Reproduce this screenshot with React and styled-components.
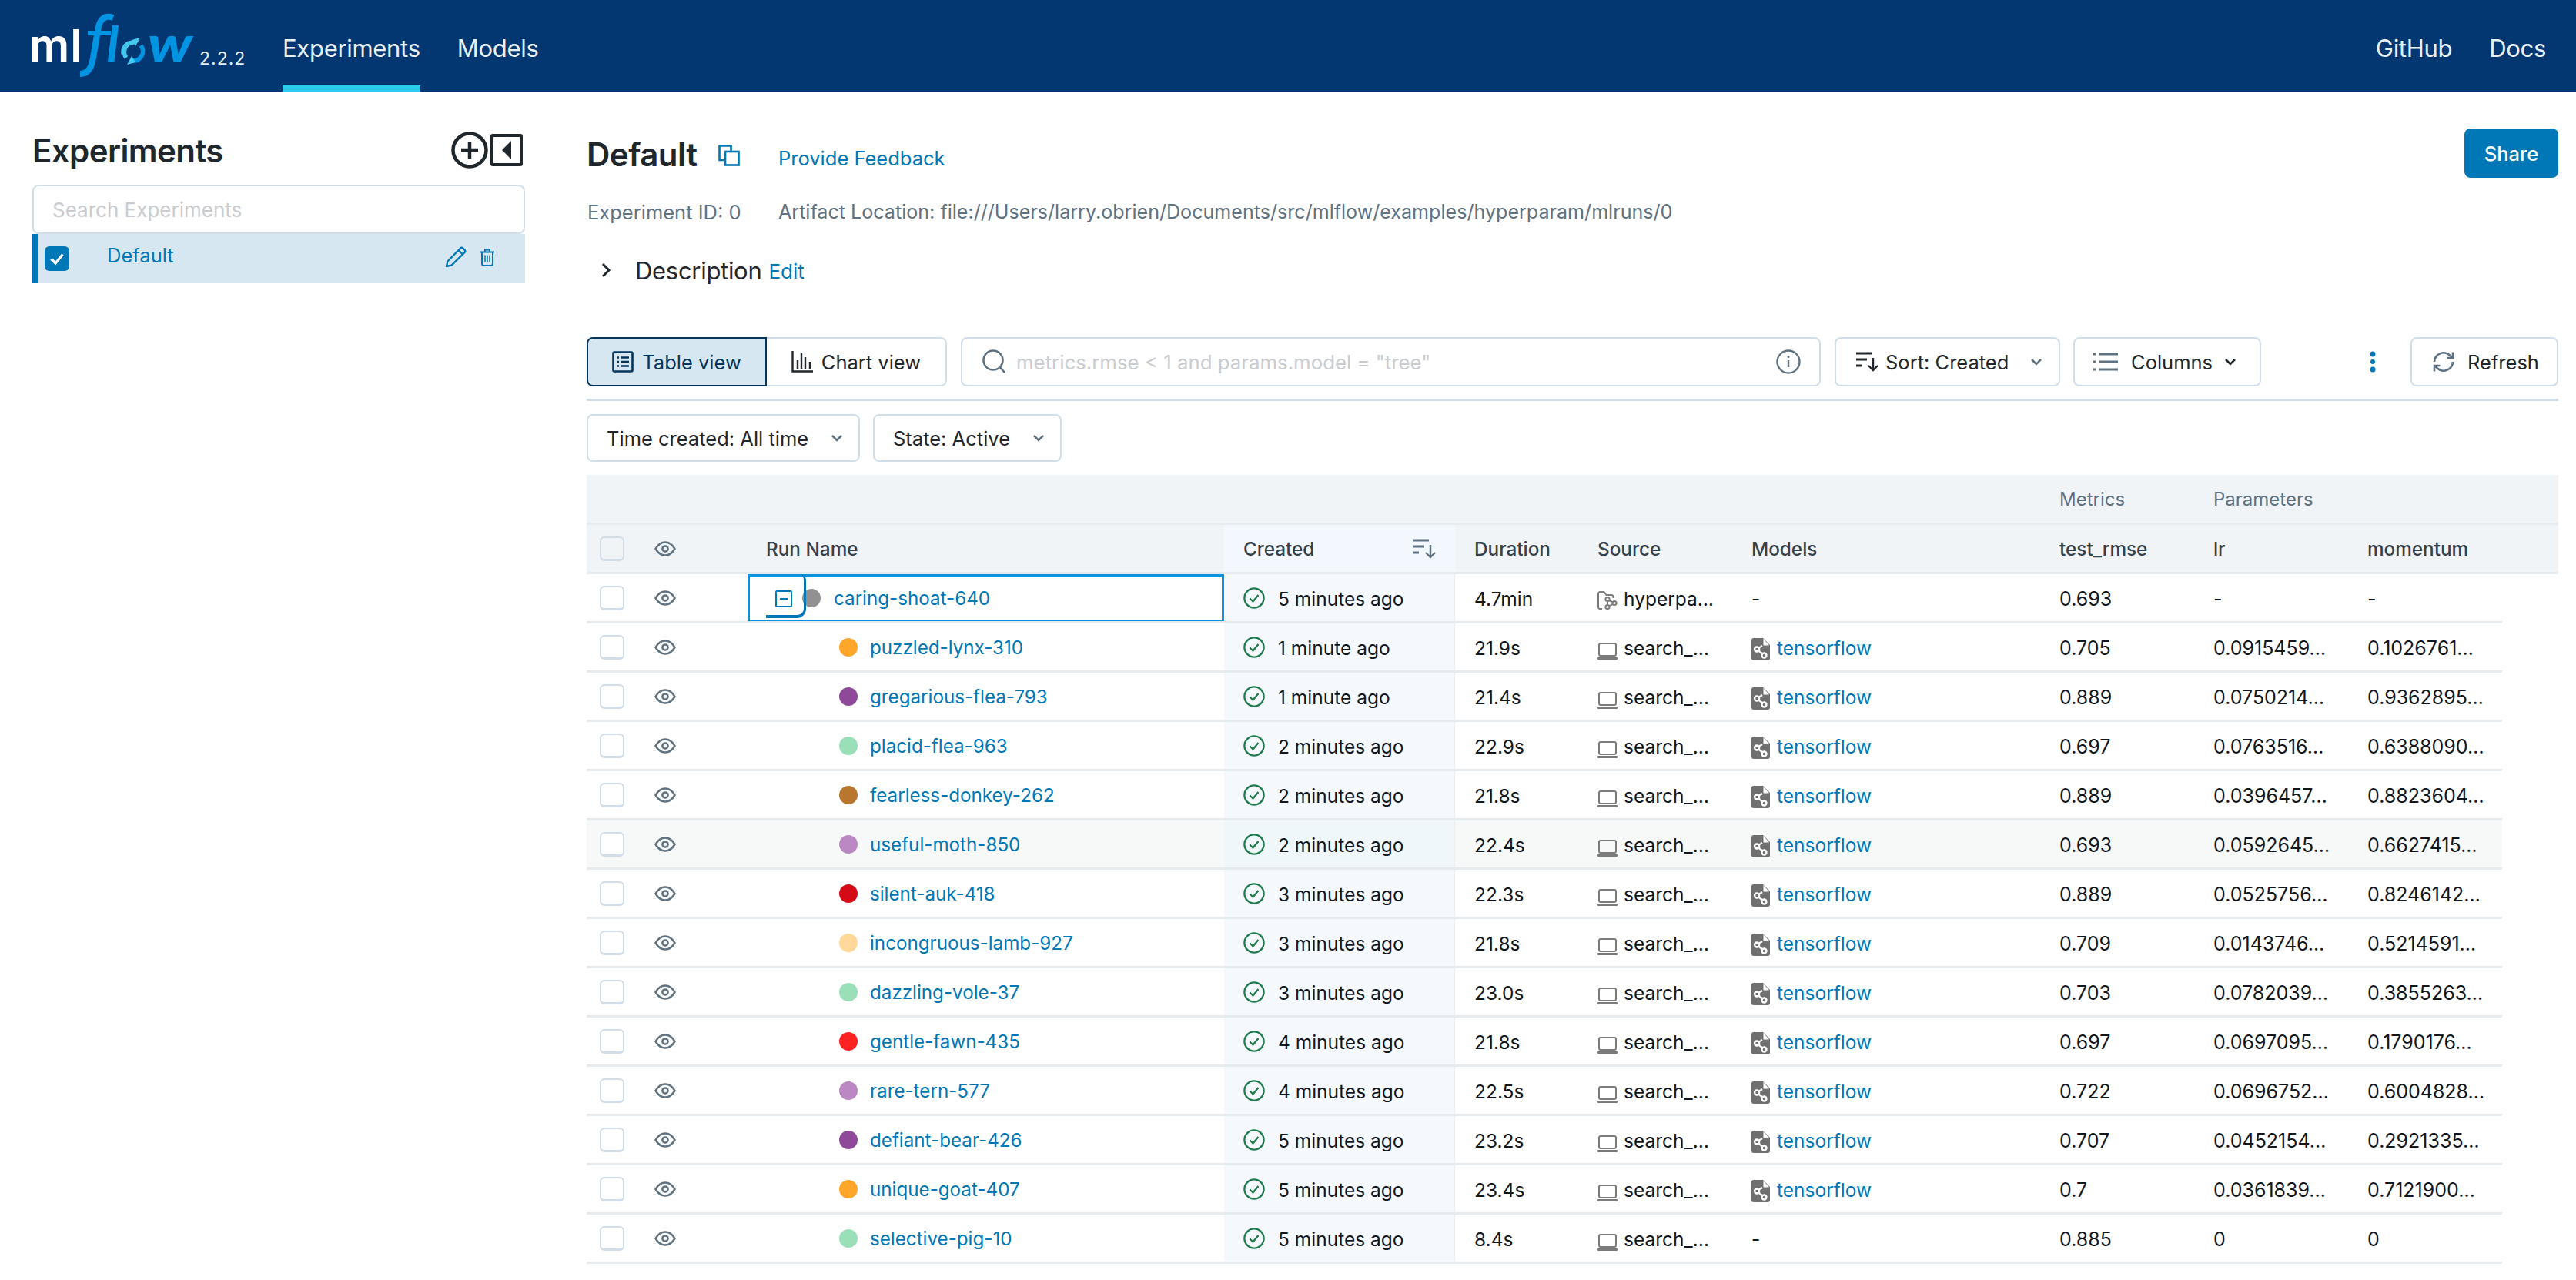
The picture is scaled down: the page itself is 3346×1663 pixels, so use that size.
import React from "react";
import styled, { createGlobalStyle } from "styled-components";

const GlobalStyle = createGlobalStyle`
  html, body { margin: 0; padding: 0; background: #fff; }
  body { font-family: Inter, "Liberation Sans", sans-serif; color: #11171c; overflow: hidden; }
  #root { width: 3346px; height: 1663px; overflow: hidden; }
  * { box-sizing: border-box; }
`;

const Shell = styled.div`display: flex; flex-direction: column; width: 3346px; height: 1663px;`;
const Header = styled.header`
  height: 119px; flex: none; background: #033771; display: flex; align-items: stretch; padding: 0 39px 0 42px;
`;
const Brand = styled.div`display: flex; align-items: flex-start; width: 325px; padding-top: 19px; position: relative;`;
const LogoSvg = styled.svg`width: 215px; height: 82px; flex: none; overflow: visible;`;
const Version = styled.span`
  font-size: 23px; color: #e8f0f7; letter-spacing: 1px; margin: 43px 0 0 2px; font-weight: 400;
`;
const NavItem = styled.a`
  display: flex; align-items: center; height: 119px; font-size: 31px; color: #e8f0f7;
  margin-right: ${p => p.$gap || 0}px; letter-spacing: -0.3px;
  border-bottom: 8px solid ${p => (p.$active ? "#2dcbee" : "transparent")};
  padding-top: 14px;
`;
const NavRight = styled.div`margin-left: auto; display: flex;`;

const Body = styled.div`display: flex; flex: 1; min-height: 0;`;
const Sidebar = styled.aside`width: 640px; margin-left: 42px; flex: none; padding-top: 52px;`;
const SideHead = styled.div`display: flex; align-items: center; height: 48px; padding: 0 3px 0 0;`;
const SideTitle = styled.h2`
  margin: 0; font-size: 42px; font-weight: 600; color: #1f272d; letter-spacing: -0.6px; line-height: 48px; padding-top: 2px;
`;
const SideTools = styled.div`margin-left: auto; display: flex; align-items: center; gap: 3px; color: #1f272d;`;
const SideSearch = styled.div`
  margin-top: 21px; height: 64px; border: 2px solid #d1dee9; border-radius: 8px; display: flex; align-items: center;
  padding-left: 24px; font-size: 26px; color: #c9ccd0;
`;
const ExpRow = styled.div`
  height: 64px; background: #d6e7f2; border-left: 8px solid #0077b6; display: flex; align-items: center;
  padding-left: 8px; color: #0077b6; font-size: 25.5px;
`;
const CheckedBox = styled.span`
  width: 32px; height: 32px; background: #0077b6; border-radius: 6px; display: flex; align-items: center; justify-content: center; flex: none;
`;
const ExpName = styled.span`margin-left: 49px; padding-bottom: 10px;`;
const ExpTools = styled.span`margin-left: auto; display: flex; align-items: center; gap: 17px; padding-right: 39px; padding-bottom: 4px;`;

const Main = styled.main`width: 2561px; margin-left: 80px; flex: none;`;
const TitleRow = styled.div`display: flex; align-items: center; height: 64px; margin-top: 48px;`;
const Title = styled.h1`margin: 2px 0 0 0; font-size: 42px; font-weight: 600; color: #1f272d; letter-spacing: -0.5px; width: 171px;`;
const CopyWrap = styled.span`display: flex; width: 78px; padding-top: 6px;`;
const LinkText = styled.a`color: #0077b6; font-size: ${p => p.$size || 25.5}px; padding-top: ${p => p.$top || 0}px;`;
const ShareBtn = styled.button`
  margin-left: auto; width: 122px; height: 64px; background: #0077b6; border: 0; border-radius: 8px; color: #fff;
  font: 500 25.5px Inter, sans-serif;
`;
const MetaRow = styled.div`display: flex; align-items: center; height: 40px; margin-top: 24px; color: #5f7281; font-size: 25.5px;`;
const MetaFirst = styled.span`width: 249px; padding-left: 1px;`;
const MetaPath = styled.span`font-size: 25.1px;`;
const DescRow = styled.div`display: flex; align-items: center; height: 40px; margin-top: 36px;`;
const DescChevron = styled.span`display: flex; width: 63px; padding-left: 14px;`;
const DescTitle = styled.span`font-size: 31px; color: #1f272d; margin-right: 9px; letter-spacing: -0.3px;`;
const DescEdit = styled.span`padding-top: 2px; display: flex;`;

const Toolbar = styled.div`
  display: flex; align-items: center; margin-top: 67px; padding-bottom: 16px; border-bottom: 3px solid #d1dee9; height: 83px;
`;
const ViewBtn = styled.div`
  width: 234px; height: 64px; display: flex; align-items: center; justify-content: center; gap: 11px; font-size: 25.5px;
  background: ${p => (p.$active ? "#d6e7f2" : "#fff")};
  color: ${p => (p.$active ? "#04355d" : "#1f272d")};
  border: 2px solid ${p => (p.$active ? "#04355d" : "#d1dee9")};
  border-radius: ${p => (p.$active ? "8px 0 0 8px" : "0 8px 8px 0")};
  border-left-width: ${p => (p.$active ? 2 : 0)}px;
`;
const QueryBox = styled.div`
  width: 1117px; margin-left: 18px; height: 64px; border: 2px solid #d1dee9; border-radius: 8px; display: flex; align-items: center;
  padding: 0 24px 0 26px; font-size: 25.8px; color: #c9ccd0; gap: 14px;
`;
const InfoSlot = styled.span`margin-left: auto; display: flex;`;
const ToolBtn = styled.div`
  width: ${p => p.$w}px; height: 64px; margin-left: ${p => p.$ml}px; border: 2px solid #d1dee9; border-radius: 8px; display: flex; align-items: center;
  padding-left: ${p => p.$pl}px; font-size: 25.5px; color: #1f272d; flex: none;
`;
const BtnLabel = styled.span`margin-left: ${p => p.$ml}px;`;
const BtnChevron = styled.span`display: flex; margin-left: ${p => p.$ml}px;`;
const Kebab = styled.span`display: flex; margin-left: auto; margin-right: 45px;`;

const Filters = styled.div`display: flex; gap: 17px; margin-top: 17px;`;
const FilterBtn = styled.div`
  width: ${p => p.$w}px; height: 62px; border: 2px solid #d1dee9; border-radius: 8px; display: flex; align-items: center;
  justify-content: space-between; padding: 0 18px 0 24px; font-size: 25.5px; color: #1f272d;
`;

const Table = styled.div`margin-top: 17px; width: 2561px;`;
const cols = "71px 138px 619px 300px 160px 200px 400px 200px 200px 200px";
const GroupRow = styled.div`
  display: grid; grid-template-columns: ${cols} 1fr; height: 65px; background: #f1f4f7; border-bottom: 3px solid #e6ebf0;
  align-items: center; font-size: 24px; color: #5f7281;
`;
const HeadRow = styled.div`
  display: grid; grid-template-columns: ${cols} 1fr; height: 64px; background: #f1f4f7; border-bottom: 3px solid #e6ebf0;
  font-size: 24.3px; font-weight: 500; color: #35424c;
`;
const HeadCell = styled.div`
  display: flex; align-items: center; padding-left: ${p => p.$pl ?? 25}px; padding-right: 24px;
  background: ${p => (p.$sorted ? "#f2f8fe" : "transparent")};
`;
const GroupCell = styled.div`grid-column: ${p => p.$col}; padding-left: 25px;`;
const SortSlot = styled.span`margin-left: auto; display: flex;`;
const Row = styled.div`
  display: grid; grid-template-columns: ${cols}; width: 2488px; height: 64px; border-bottom: 3px solid #e6ebf0;
  background: ${p => (p.$hover ? "#f7f8f8" : "#fff")}; font-size: 24.5px; color: #11171c; position: relative;
`;
const Cell = styled.div`
  display: flex; align-items: center; padding-left: ${p => p.$pl ?? 25}px; white-space: nowrap; overflow: hidden; min-width: 0;
`;
const TextCell = styled(Cell)`padding-top: 2px;`;
const NumCell = styled(Cell)`padding-top: 2px; font-size: 25px;`;
const CreatedCell = styled(Cell)`
  background: ${p => (p.$hover ? "#eff7fb" : "#f5f9fe")}; border-right: 2px solid #e9eef3; padding-left: 25px; gap: 17px;
`;
const CreatedText = styled.span`padding-top: 2px;`;
const Checkbox = styled.span`
  width: 32px; height: 32px; border: 2px solid #d1dee9; border-bottom-width: 3px; border-radius: 6px; background: ${p => (p.$head ? "transparent" : "#fff")}; flex: none;
`;
const NameCell = styled(Cell)`
  padding-left: ${p => (p.$root ? 71 : 119)}px; color: #0077b6; font-size: 24.2px; gap: ${p => (p.$root ? 17 : 16)}px; position: relative;
`;
const NameText = styled.span`padding-top: 2px;`;
const FocusRing = styled.span`
  position: absolute; left: 0; top: 0; right: 0; bottom: -2px; border: 3px solid #0a93e1; pointer-events: none;
`;
const Expander = styled.span`
  position: absolute; left: 24px; top: 0; width: 52px; height: 57px; border-right: 3px solid #0077b6; border-bottom: 4px solid #0077b6;
  border-bottom-right-radius: 12px; border-top-right-radius: 8px; display: flex; align-items: flex-start; padding-left: 12px; padding-top: 21px;
`;
const Dot = styled.span`width: 24px; height: 24px; border-radius: 50%; background: ${p => p.$c}; flex: none;`;
const IconText = styled.span`margin-left: ${p => p.$ml}px; color: ${p => p.$c || "inherit"};`;
const IconSlot = styled.span`display: flex; flex: none; margin-top: ${p => p.$top || 0}px;`;

const Plus = () => (
  <svg width="48" height="48" viewBox="0 0 48 48" fill="none" stroke="currentColor"><circle cx="24" cy="24" r="21.5" strokeWidth="4.5" /><path d="M24 13v22M13 24h22" strokeWidth="4.5" /></svg>
);
const Collapse = () => (
  <svg width="42" height="42" viewBox="0 0 42 42"><rect x="2" y="2" width="38" height="38" rx="1" fill="none" stroke="currentColor" strokeWidth="4" /><path d="M27 9v24L15 21z" fill="currentColor" /></svg>
);
const CheckGlyph = () => (
  <svg width="22" height="22" viewBox="0 0 22 22" fill="none" stroke="#fff" strokeWidth="3.4"><path d="M3.5 11.5l5.5 5.5L18.5 5.5" /></svg>
);
const Pencil = () => (
  <svg width="28" height="28" viewBox="0 0 28 28" fill="none" stroke="#0077b6" strokeWidth="2.4" strokeLinejoin="round"><path d="M2 26l1.4-6.5L20 2.5a2.4 2.4 0 013.4 0l2.1 2.1a2.4 2.4 0 010 3.4L8.5 24.6z" /><path d="M17.5 5l5.5 5.5" /></svg>
);
const Trash = () => (
  <svg width="20" height="23" viewBox="0 0 20 23" fill="none" stroke="#0077b6" strokeWidth="2"><path d="M1 4.5h18M7 4.5V1.5h6v3M3 4.5v15a2.5 2.5 0 002.5 2.5h9a2.5 2.5 0 002.5-2.5v-15" /><path d="M7 8.5v9M10 8.5v9M13 8.5v9" strokeWidth="1.5" /></svg>
);
const Copy = () => (
  <svg width="28" height="28" viewBox="0 0 28 28" fill="none" stroke="#0077b6" strokeWidth="2.6"><path d="M7 20H1.5V1.5h15V8" /><rect x="9" y="9" width="17.5" height="17.5" /></svg>
);
const Chevron = ({ dir = "down", size = 20, color = "#5f7281", sw = 2.6 }) => (
  <svg width={size} height={size} viewBox="0 0 20 20" fill="none" stroke={color} strokeWidth={sw}>
    <path d={dir === "down" ? "M4 7l6 6 6-6" : "M7 2l8 8-8 8"} />
  </svg>
);
const ListIcon = () => (
  <svg width="28" height="28" viewBox="0 0 28 28" fill="none" stroke="#04355d" strokeWidth="2.6"><rect x="1.5" y="1.5" width="25" height="25" rx="1.5" /><path d="M12 8.5h10M12 14h10M12 19.5h10" /><path d="M6 8.5h3M6 14h3M6 19.5h3" /></svg>
);
const ChartIcon = () => (
  <svg width="28" height="28" viewBox="0 0 28 28" fill="none" stroke="#1f272d" strokeWidth="2.4"><path d="M1.5 0v26.5H28" /><path d="M8 12v11M13 2v21M18 8v15M24 14v9" /></svg>
);
const SearchIcon = () => (
  <svg width="30" height="32" viewBox="0 0 30 32" fill="none" stroke="#5f7281" strokeWidth="2.6"><circle cx="14" cy="14" r="12.5" /><path d="M23 23l6 7" /></svg>
);
const InfoIcon = () => (
  <svg width="32" height="32" viewBox="0 0 32 32" fill="none" stroke="#5f7281" strokeWidth="2.4"><circle cx="16" cy="16" r="14.5" /><path d="M16 14v9" /><circle cx="16" cy="9.5" r="1.5" fill="#5f7281" stroke="none" /></svg>
);
const SortIcon = ({ color = "#1f272d" }) => (
  <svg width="30" height="26" viewBox="0 0 30 26" fill="none" stroke={color} strokeWidth="2.8"><path d="M0 2h20M0 10h14M0 18h7" /><path d="M22 8v16M16 18l6 6 6-6" strokeWidth="2.4" /></svg>
);
const ColumnsIcon = () => (
  <svg width="32" height="24" viewBox="0 0 32 24" fill="none" stroke="#5f7281" strokeWidth="2.8"><path d="M8 2h24M8 12h24M8 22h24" /><path d="M0 2h3M0 12h3M0 22h3" /></svg>
);
const KebabIcon = () => (
  <svg width="8" height="28" viewBox="0 0 8 28" fill="#0077b6"><circle cx="4" cy="4" r="3.5" /><circle cx="4" cy="14" r="3" /><circle cx="4" cy="24" r="3.5" /></svg>
);
const RefreshIcon = () => (
  <svg width="30" height="28" viewBox="0 0 30 28" fill="none" stroke="#5f7281" strokeWidth="2.6"><path d="M3 14A12 12 0 0123 5.5l3 3" /><path d="M27 14A12 12 0 017 22.5l-3-3" /><path d="M27 1.5v7.500h-7.5M3 26.5V19h7.5" /></svg>
);
const Eye = () => (
  <svg width="28" height="20" viewBox="0 0 28 20" fill="none" stroke="#5f7281" strokeWidth="2.5"><path d="M1.5 10C5 4 9 1.5 14 1.5S23 4 26.5 10C23 16 19 18.5 14 18.5S5 16 1.5 10z" /><circle cx="14" cy="10" r="3.6" /></svg>
);
const MinusBox = () => (
  <svg width="22" height="22" viewBox="0 0 22 22" fill="none" stroke="#0077b6" strokeWidth="2"><rect x="1" y="1" width="20" height="20" rx="1" /><path d="M6 11h10" /></svg>
);
const CheckCircle = () => (
  <svg width="28" height="28" viewBox="0 0 28 28" fill="none" stroke="#1f7a4c" strokeWidth="2.3"><circle cx="14" cy="14" r="12.6" /><path d="M8.5 14.5l4 4 7-8.5" /></svg>
);
const FolderBranch = () => (
  <svg width="26" height="26" viewBox="0 0 26 26" fill="none" stroke="#7b7b7b" strokeWidth="2"><path d="M6 24H3.500A2.500 2.500 0 011 21.500V4.500A2.500 2.500 0 013.500 2H8.500l3 4H18a2.500 2.500 0 012.500 2.500V10" /><circle cx="13" cy="11.500" r="2.600" /><circle cx="13" cy="21.500" r="2.600" /><circle cx="22" cy="16.500" r="2.600" /><path d="M13 14v5M15.200 13l4.600 2.300M15.200 20.300l4.600-2.500" /></svg>
);
const Laptop = () => (
  <svg width="26" height="28" viewBox="0 0 26 28" fill="none"><rect x="2" y="6" width="22" height="16" rx="2" stroke="#7b7b7b" strokeWidth="2" /><rect x="0" y="24" width="26" height="3" rx="1" fill="#7b7b7b" /></svg>
);
const ModelIcon = () => (
  <svg width="24" height="29" viewBox="0 0 24 29"><path d="M3 0h12l9 9v17a3 3 0 01-3 3H3a3 3 0 01-3-3V3a3 3 0 013-3z" fill="#6f6f6f" /><path d="M15.500 1v8.500H23z" fill="#fff" /><g fill="none" stroke="#fff" strokeWidth="2.400"><circle cx="7" cy="14.500" r="3" /><circle cx="16.500" cy="22.500" r="3" /><path d="M9.300 16.500l5 4M9.500 13l4.500-3" /></g></svg>
);

const Logo = () => (
  <LogoSvg viewBox="0 0 215 82">
    <text x="-4" y="61" fontFamily="Inter, sans-serif" fontWeight="600" fontSize="58" fill="#fff" letterSpacing="1">ml</text>
    <path d="M105 4C93 0 87.5 7 85.5 18L79 56C77 70 71 77 62 77" fill="none" stroke="#0194e2" strokeWidth="8" />
    <path d="M72 24h30" stroke="#0194e2" strokeWidth="6" />
    <text x="97" y="61" fontFamily="Lato, sans-serif" fontStyle="italic" fontWeight="900" fontSize="62" fill="#0194e2">l</text>
    <path d="M122 56A12.5 12.5 0 01133 36" fill="none" stroke="#43c9ed" strokeWidth="5.5" />
    <path d="M118.5 51A12.5 12.5 0 01126 37" fill="none" stroke="#43c9ed" strokeWidth="6" />
    <path d="M141 40A12.5 12.5 0 01130 60" fill="none" stroke="#0194e2" strokeWidth="5.5" />
    <path d="M140 30l-6 11-5-8zM123 65l6-11 5 8z" fill="#43c9ed" />
    <text x="150" y="61" fontFamily="Lato, sans-serif" fontStyle="italic" fontWeight="900" fontSize="62" fill="#0194e2" textLength="58" lengthAdjust="spacingAndGlyphs">w</text>
  </LogoSvg>
);

const runs = [
  ["puzzled-lynx-310", "#ffa62b", "1 minute ago", "21.9s", "0.705", "0.0915459…", "0.1026761…"],
  ["gregarious-flea-793", "#8e4a99", "1 minute ago", "21.4s", "0.889", "0.0750214…", "0.9362895…"],
  ["placid-flea-963", "#99dfb8", "2 minutes ago", "22.9s", "0.697", "0.0763516…", "0.6388090…"],
  ["fearless-donkey-262", "#b8762f", "2 minutes ago", "21.8s", "0.889", "0.0396457…", "0.8823604…"],
  ["useful-moth-850", "#bc88c4", "2 minutes ago", "22.4s", "0.693", "0.0592645…", "0.6627415…"],
  ["silent-auk-418", "#d30b17", "3 minutes ago", "22.3s", "0.889", "0.0525756…", "0.8246142…"],
  ["incongruous-lamb-927", "#ffd89a", "3 minutes ago", "21.8s", "0.709", "0.0143746…", "0.5214591…"],
  ["dazzling-vole-37", "#99dfb8", "3 minutes ago", "23.0s", "0.703", "0.0782039…", "0.3855263…"],
  ["gentle-fawn-435", "#ff2222", "4 minutes ago", "21.8s", "0.697", "0.0697095…", "0.1790176…"],
  ["rare-tern-577", "#bc88c4", "4 minutes ago", "22.5s", "0.722", "0.0696752…", "0.6004828…"],
  ["defiant-bear-426", "#8e4a99", "5 minutes ago", "23.2s", "0.707", "0.0452154…", "0.2921335…"],
  ["unique-goat-407", "#ffa62b", "5 minutes ago", "23.4s", "0.7", "0.0361839…", "0.7121900…"],
  ["selective-pig-10", "#99dfb8", "5 minutes ago", "8.4s", "0.885", "0", "0"],
];

export default function App() {
  return (
    <Shell>
      <GlobalStyle />
      <Header>
        <Brand>
          <Logo />
          <Version>2.2.2</Version>
        </Brand>
        <NavItem $active $gap={48}>Experiments</NavItem>
        <NavItem>Models</NavItem>
        <NavRight>
          <NavItem $gap={48}>GitHub</NavItem>
          <NavItem>Docs</NavItem>
        </NavRight>
      </Header>
      <Body>
        <Sidebar>
          <SideHead>
            <SideTitle>Experiments</SideTitle>
            <SideTools><Plus /><Collapse /></SideTools>
          </SideHead>
          <SideSearch>Search Experiments</SideSearch>
          <ExpRow>
            <CheckedBox><CheckGlyph /></CheckedBox>
            <ExpName>Default</ExpName>
            <ExpTools><Pencil /><Trash /></ExpTools>
          </ExpRow>
        </Sidebar>
        <Main>
          <TitleRow>
            <Title>Default</Title>
            <CopyWrap><Copy /></CopyWrap>
            <LinkText $top={13}>Provide Feedback</LinkText>
            <ShareBtn>Share</ShareBtn>
          </TitleRow>
          <MetaRow>
            <MetaFirst>Experiment ID: 0</MetaFirst>
            <MetaPath>Artifact Location: file:///Users/larry.obrien/Documents/src/mlflow/examples/hyperparam/mlruns/0</MetaPath>
          </MetaRow>
          <DescRow>
            <DescChevron><Chevron dir="right" color="#1f272d" sw={3} /></DescChevron>
            <DescTitle>Description</DescTitle>
            <DescEdit><LinkText $size={26}>Edit</LinkText></DescEdit>
          </DescRow>
          <Toolbar>
            <ViewBtn $active><ListIcon />Table view</ViewBtn>
            <ViewBtn><ChartIcon />Chart view</ViewBtn>
            <QueryBox>
              <SearchIcon />
              <span>metrics.rmse &lt; 1 and params.model = "tree"</span>
              <InfoSlot><InfoIcon /></InfoSlot>
            </QueryBox>
            <ToolBtn $w={293} $ml={18} $pl={26}>
              <SortIcon />
              <BtnLabel $ml={8}>Sort: Created</BtnLabel>
              <BtnChevron $ml={26}><Chevron /></BtnChevron>
            </ToolBtn>
            <ToolBtn $w={244} $ml={17} $pl={24}>
              <ColumnsIcon />
              <BtnLabel $ml={17}>Columns</BtnLabel>
              <BtnChevron $ml={13}><Chevron color="#1f272d" /></BtnChevron>
            </ToolBtn>
            <Kebab><KebabIcon /></Kebab>
            <ToolBtn $w={192} $ml={0} $pl={26}>
              <RefreshIcon />
              <BtnLabel $ml={16}>Refresh</BtnLabel>
            </ToolBtn>
          </Toolbar>
          <Filters>
            <FilterBtn $w={355}>Time created: All time<Chevron /></FilterBtn>
            <FilterBtn $w={245}>State: Active<Chevron /></FilterBtn>
          </Filters>
          <Table>
            <GroupRow>
              <GroupCell $col="8">Metrics</GroupCell>
              <GroupCell $col="9">Parameters</GroupCell>
            </GroupRow>
            <HeadRow>
              <HeadCell $pl={17}><Checkbox $head /></HeadCell>
              <HeadCell $pl={17}><Eye /></HeadCell>
              <HeadCell $pl={24}>Run Name</HeadCell>
              <HeadCell $sorted>Created<SortSlot><SortIcon color="#5f7281" /></SortSlot></HeadCell>
              <HeadCell>Duration</HeadCell>
              <HeadCell>Source</HeadCell>
              <HeadCell>Models</HeadCell>
              <HeadCell>test_rmse</HeadCell>
              <HeadCell>lr</HeadCell>
              <HeadCell>momentum</HeadCell>
            </HeadRow>
            <Row>
              <Cell $pl={17}><Checkbox /></Cell>
              <Cell $pl={17}><Eye /></Cell>
              <NameCell $root>
                <FocusRing />
                <Expander><MinusBox /></Expander>
                <Dot $c="#919191" />
                <NameText>caring-shoat-640</NameText>
              </NameCell>
              <CreatedCell><CheckCircle /><CreatedText>5 minutes ago</CreatedText></CreatedCell>
              <TextCell>4.7min</TextCell>
              <TextCell><IconSlot $top={4}><FolderBranch /></IconSlot><IconText $ml={8}>hyperpa…</IconText></TextCell>
              <TextCell>-</TextCell>
              <NumCell>0.693</NumCell>
              <NumCell>-</NumCell>
              <NumCell>-</NumCell>
            </Row>
            {runs.map(([name, color, created, dur, rmse, lr, mom], i) => (
              <Row key={name} $hover={i === 4}>
                <Cell $pl={17}><Checkbox /></Cell>
                <Cell $pl={17}><Eye /></Cell>
                <NameCell>
                  <Dot $c={color} />
                  <NameText>{name}</NameText>
                </NameCell>
                <CreatedCell $hover={i === 4}><CheckCircle /><CreatedText>{created}</CreatedText></CreatedCell>
                <TextCell>{dur}</TextCell>
                <TextCell><IconSlot $top={4}><Laptop /></IconSlot><IconText $ml={8}>search_…</IconText></TextCell>
                <TextCell>
                  {i === 12 ? "-" : (<><IconSlot $top={4}><ModelIcon /></IconSlot><IconText $ml={9} $c="#0077b6">tensorflow</IconText></>)}
                </TextCell>
                <NumCell>{rmse}</NumCell>
                <NumCell>{lr}</NumCell>
                <NumCell>{mom}</NumCell>
              </Row>
            ))}
          </Table>
        </Main>
      </Body>
    </Shell>
  );
}
